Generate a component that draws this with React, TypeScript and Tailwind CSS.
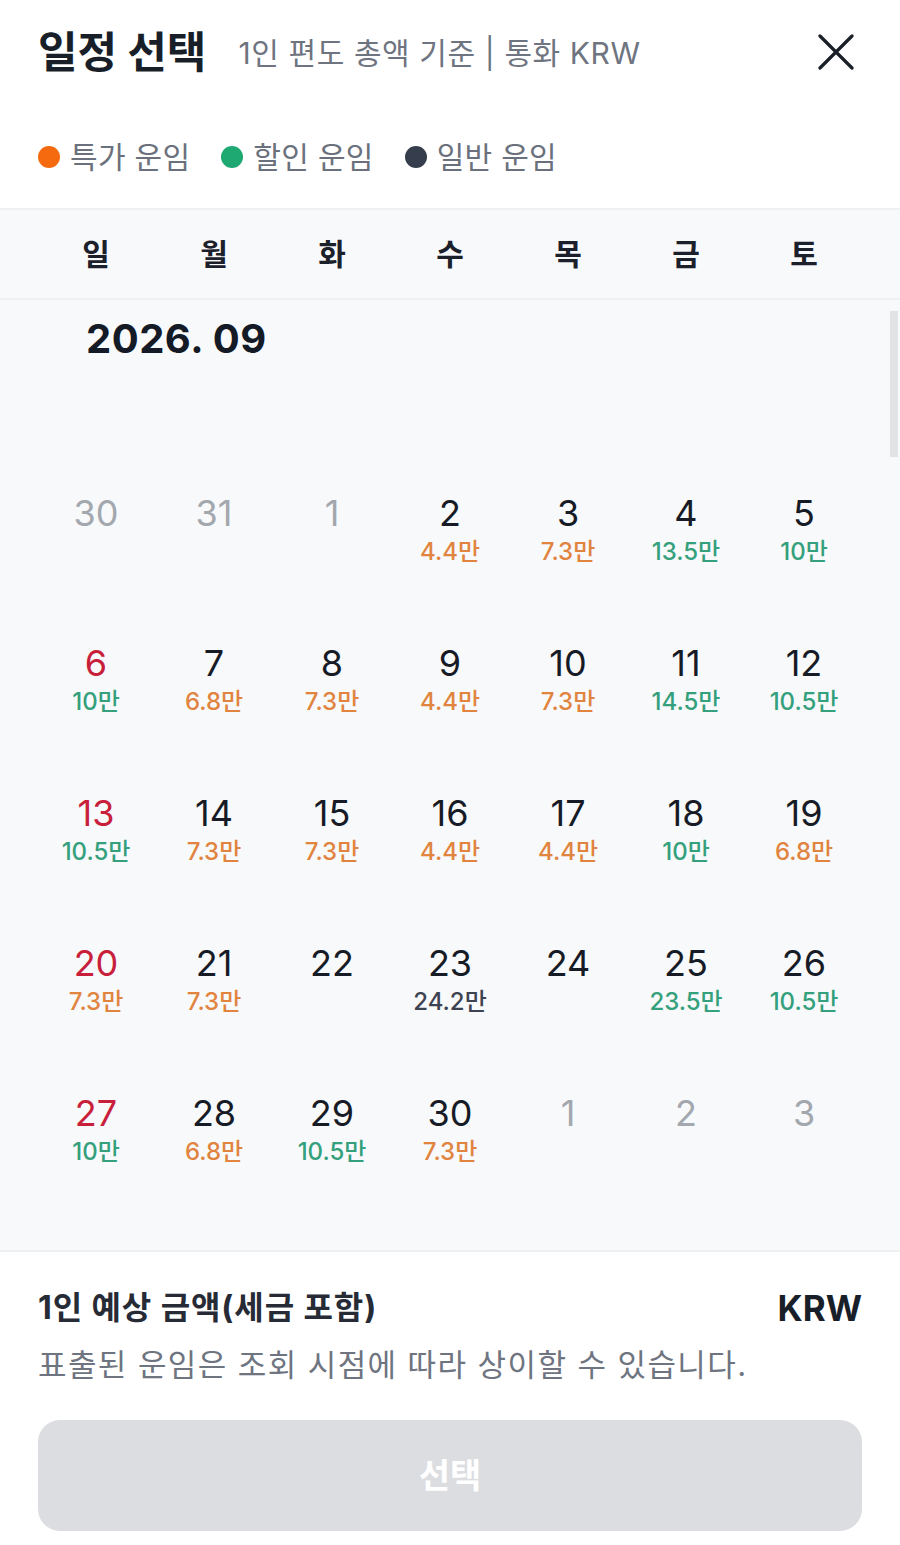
import React from 'react';

type Tone = 'sale' | 'discount' | 'normal';

type Day = {
  d: number;
  muted?: boolean;
  sun?: boolean;
  price?: string;
  tone?: Tone;
};

const toneClass: Record<Tone, string> = {
  sale: 'text-[#e0843f]',
  discount: 'text-[#34a07c]',
  normal: 'text-[#3d4350]',
};

const weeks: Day[][] = [
  [
    { d: 30, muted: true },
    { d: 31, muted: true },
    { d: 1, muted: true },
    { d: 2, price: '4.4만', tone: 'sale' },
    { d: 3, price: '7.3만', tone: 'sale' },
    { d: 4, price: '13.5만', tone: 'discount' },
    { d: 5, price: '10만', tone: 'discount' },
  ],
  [
    { d: 6, sun: true, price: '10만', tone: 'discount' },
    { d: 7, price: '6.8만', tone: 'sale' },
    { d: 8, price: '7.3만', tone: 'sale' },
    { d: 9, price: '4.4만', tone: 'sale' },
    { d: 10, price: '7.3만', tone: 'sale' },
    { d: 11, price: '14.5만', tone: 'discount' },
    { d: 12, price: '10.5만', tone: 'discount' },
  ],
  [
    { d: 13, sun: true, price: '10.5만', tone: 'discount' },
    { d: 14, price: '7.3만', tone: 'sale' },
    { d: 15, price: '7.3만', tone: 'sale' },
    { d: 16, price: '4.4만', tone: 'sale' },
    { d: 17, price: '4.4만', tone: 'sale' },
    { d: 18, price: '10만', tone: 'discount' },
    { d: 19, price: '6.8만', tone: 'sale' },
  ],
  [
    { d: 20, sun: true, price: '7.3만', tone: 'sale' },
    { d: 21, price: '7.3만', tone: 'sale' },
    { d: 22 },
    { d: 23, price: '24.2만', tone: 'normal' },
    { d: 24 },
    { d: 25, price: '23.5만', tone: 'discount' },
    { d: 26, price: '10.5만', tone: 'discount' },
  ],
  [
    { d: 27, sun: true, price: '10만', tone: 'discount' },
    { d: 28, price: '6.8만', tone: 'sale' },
    { d: 29, price: '10.5만', tone: 'discount' },
    { d: 30, price: '7.3만', tone: 'sale' },
    { d: 1, muted: true },
    { d: 2, muted: true },
    { d: 3, muted: true },
  ],
];

const weekdays = ['일', '월', '화', '수', '목', '금', '토'];

const legend = [
  { label: '특가 운임', dot: 'bg-[#f56a0f]' },
  { label: '할인 운임', dot: 'bg-[#1ea872]' },
  { label: '일반 운임', dot: 'bg-[#363d4c]' },
];

const font = "font-['Inter','Noto_Sans_CJK_KR',sans-serif]";

const DayCell = ({ day }: { day: Day }) => {
  const numColor = day.muted
    ? 'text-[#a3a7ae]'
    : day.sun
    ? 'text-[#c8203b]'
    : 'text-[#161b26]';
  return (
    <div className="h-[150px] flex flex-col items-center">
      <span className={`h-10 leading-10 text-[36px] ${numColor}`}>{day.d}</span>
      {day.price && (
        <span className={`mt-1 h-[30px] leading-[30px] text-[24px] font-medium ${toneClass[day.tone ?? 'normal']}`}>
          {day.price}
        </span>
      )}
    </div>
  );
};

export default function App() {
  return (
    <div className={`w-[900px] h-[1545px] bg-white flex flex-col ${font}`}>
      {/* header */}
      <div className="px-[38px] pt-[28px] pb-[31px]">
        <div className="h-12 flex items-center">
          <h1 className="text-[43px] font-bold text-[#191f28]">일정 선택</h1>
          <span className="ml-[32px] text-[30px] text-[#6e7480] tracking-[0.6px] mt-[2px]">1인 편도 총액 기준 | 통화 KRW</span>
          <button className="ml-auto mr-[8px] text-[#191f28]">
            <svg width="36" height="36" viewBox="0 0 36 36" fill="none" stroke="currentColor" strokeWidth="3.2" strokeLinecap="round">
              <path d="M2 2 L34 34 M34 2 L2 34" />
            </svg>
          </button>
        </div>
        <div className="mt-[61px] h-10 flex items-center">
          {legend.map((item) => (
            <div key={item.label} className="flex items-center mr-[31px]">
              <span className={`w-[22px] h-[22px] rounded-full ${item.dot}`} />
              <span className="ml-[10px] text-[30px] text-[#6b717c] tracking-[0.3px]">{item.label}</span>
            </div>
          ))}
        </div>
      </div>

      {/* weekday row */}
      <div className="h-[92px] bg-[#f8f9fb] border-y-2 border-[#eef0f2] px-[37px] grid grid-cols-7 items-center">
        {weekdays.map((w) => (
          <span key={w} className="text-center text-[30px] font-bold text-[#1b202b]">{w}</span>
        ))}
      </div>

      {/* calendar */}
      <div className="relative flex-1 bg-[#f8f9fb] pt-[15px] px-[37px]">
        <div className="pl-[49px] h-12 leading-[48px] text-[40px] font-bold text-[#141a26] tracking-[0.5px]">2026. 09</div>
        <div className="mt-[130px] flex flex-col">
          {weeks.map((week, i) => (
            <div key={i} className="grid grid-cols-7">
              {week.map((day, j) => (
                <DayCell key={j} day={day} />
              ))}
            </div>
          ))}
        </div>
        <div className="absolute right-[2px] top-[11px] w-[8px] h-[146px] bg-[#e2e3e5]" />
      </div>

      {/* footer */}
      <div className="border-t-2 border-[#eef0f2] px-[38px] pt-[34px] pb-[14px]">
        <div className="h-11 flex items-center justify-between">
          <span className="text-[32px] font-bold text-[#262b35] tracking-[0.9px]">1인 예상 금액(세금 포함)</span>
          <span className="text-[35px] font-bold text-[#191f28]">KRW</span>
        </div>
        <p className="mt-[13px] h-11 leading-[44px] text-[31px] text-[#6e7480] tracking-[1.4px]">
          표출된 운임은 조회 시점에 따라 상이할 수 있습니다.
        </p>
        <button className="mt-[33px] w-full h-[111px] rounded-[22px] bg-[#dcdde1] text-white text-[34px] font-bold">
          선택
        </button>
      </div>
    </div>
  );
}
